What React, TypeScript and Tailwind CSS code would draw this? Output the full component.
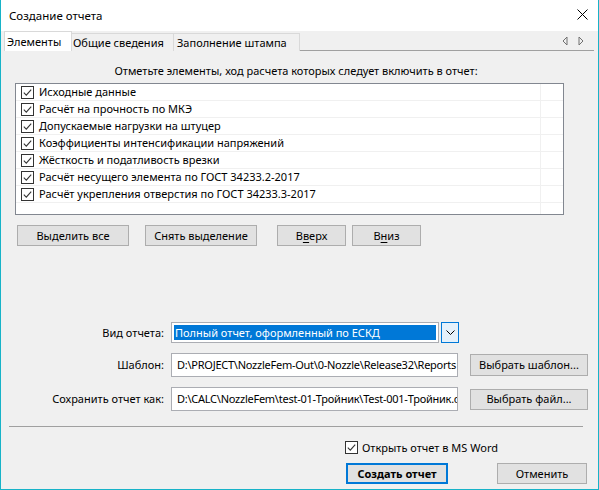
import React from 'react';

const items = [
  'Исходные данные',
  'Расчёт на прочность по МКЭ',
  'Допускаемые нагрузки на штуцер',
  'Коэффициенты интенсификации напряжений',
  'Жёсткость и податливость врезки',
  'Расчёт несущего элемента по ГОСТ 34233.2-2017',
  'Расчёт укрепления отверстия по ГОСТ 34233.3-2017',
];

const buttonClass =
  'flex shrink-0 items-center justify-center border border-[#adadad] bg-[#e1e1e1] leading-[16px]';
const fieldClass =
  'flex h-[24px] w-[287px] shrink-0 items-center overflow-hidden whitespace-nowrap border border-[#abadb3] bg-white pl-[5px] leading-[16px] tracking-[-0.25px]';

function CheckBox() {
  return (
    <svg width="13" height="13" viewBox="0 0 13 13" className="shrink-0">
      <rect x="0.5" y="0.5" width="12" height="12" fill="#fff" stroke="#333" />
      <path d="M2.8 6.6 L5.3 9.1 L10.2 3.6" fill="none" stroke="#333" strokeWidth="1.1" />
    </svg>
  );
}

export default function App() {
  return (
    <div className="flex h-[490px] w-[599px] flex-col border-x border-b border-[#17b3c8] bg-[#f0f0f0] font-['Noto_Sans','Open_Sans',sans-serif] text-[11px] text-black">
      {/* title bar */}
      <div className="flex h-[31px] shrink-0 justify-between bg-white pl-[8px] pr-[10px]">
        <span className="pt-[8px] text-[11.5px] leading-[16px]">Создание отчета</span>
        <svg width="11" height="11" viewBox="0 0 11 11" className="mt-[9px]">
          <path d="M0.5 0.5 L10.5 10.5 M10.5 0.5 L0.5 10.5" stroke="#000" strokeWidth="1" />
        </svg>
      </div>

      {/* tabs */}
      <div className="flex h-[20px] shrink-0 items-end pl-[3px]">
        <div className="flex h-[20px] w-[68px] items-center border border-b-0 border-[#d9d9d9] bg-white pl-[2px] leading-[16px]">
          Элементы
        </div>
        <div className="flex h-[18px] w-[102px] items-center border-r border-t border-[#d9d9d9] pl-[1px] leading-[16px]">
          Общие сведения
        </div>
        <div className="flex h-[18px] w-[126px] items-center border-r border-t border-[#d9d9d9] pl-[3px] leading-[16px]">
          Заполнение штампа
        </div>
        <div className="mr-[4px] flex h-full flex-1 items-center justify-end gap-[10px] border-b border-[#a0a0a0] pr-[10px]">
          <svg width="6" height="10" viewBox="0 0 6 10">
            <path d="M5 1 L1 5 L5 9 Z" fill="none" stroke="#707070" />
          </svg>
          <svg width="6" height="10" viewBox="0 0 6 10">
            <path d="M1 1 L5 5 L1 9 Z" fill="none" stroke="#707070" />
          </svg>
        </div>
      </div>

      {/* panel */}
      <div className="flex flex-1 flex-col">
        <div className="mt-[12px] pr-[7px] text-center leading-[16px]">
          Отметьте элементы, ход расчета которых следует включить в отчет:
        </div>

        <div className="ml-[14px] mt-[4px] flex h-[132px] w-[549px] flex-col border border-[#828790] bg-white">
          {items.map((item) => (
            <div key={item} className="flex h-[17px] shrink-0 border-b border-[#f0f0f0]">
              <div className="flex w-[525px] items-center gap-[5px] border-r border-[#f0f0f0] pl-[5px] leading-[16px]">
                <CheckBox />
                <span className="whitespace-nowrap">{item}</span>
              </div>
            </div>
          ))}
          <div className="flex flex-1">
            <div className="w-[525px] border-r border-[#f0f0f0]" />
          </div>
        </div>

        <div className="ml-[16px] mt-[10px] flex h-[21px]">
          <div className={`${buttonClass} w-[112px]`}>Выделить все</div>
          <div className={`${buttonClass} ml-[16px] w-[112px]`}>Снять выделение</div>
          <div className={`${buttonClass} ml-[20px] w-[69px]`}>
            В<span className="underline underline-offset-2">в</span>ерх
          </div>
          <div className={`${buttonClass} ml-[6px] w-[69px]`}>
            В<span className="underline underline-offset-2">н</span>из
          </div>
        </div>

        {/* report form */}
        <div className="mt-[76px] flex h-[21px] items-center">
          <div className="w-[163px] shrink-0 text-right leading-[16px]">Вид отчета:</div>
          <div className="ml-[7px] flex h-[21px] w-[288px]">
            <div className="flex flex-1 border border-[#abadb3] bg-white p-[2px]">
              <div className="flex flex-1 items-center bg-[#0078d7] pl-[1px] leading-[16px] text-white">
                Полный отчет, оформленный по ЕСКД
              </div>
            </div>
            <div className="ml-[2px] flex w-[18px] items-center justify-center border border-[#0078d7] bg-[#e5f1fb]">
              <svg width="9" height="5" viewBox="0 0 9 5">
                <path d="M0.5 0.5 L4.5 4.5 L8.5 0.5" fill="none" stroke="#000" />
              </svg>
            </div>
          </div>
        </div>

        <div className="mt-[10px] flex h-[24px] items-center">
          <div className="w-[163px] shrink-0 text-right leading-[16px]">Шаблон:</div>
          <div className={`${fieldClass} ml-[7px]`}>D:\PROJECT\NozzleFem-Out\0-Nozzle\Release32\Reports</div>
          <div className={`${buttonClass} ml-[12px] h-[22px] w-[118px]`}>Выбрать шаблон...</div>
        </div>

        <div className="mt-[10px] flex h-[24px] items-center">
          <div className="w-[163px] shrink-0 text-right leading-[16px]">Сохранить отчет как:</div>
          <div className={`${fieldClass} ml-[7px]`}>D:\CALC\NozzleFem\test-01-Тройник\Test-001-Тройник.docx</div>
          <div className={`${buttonClass} ml-[12px] h-[21px] w-[118px]`}>Выбрать файл...</div>
        </div>

        <div className="ml-[8px] mt-[15px] h-px w-[574px] bg-[#a0a0a0]" />

        <div className="ml-[344px] mt-[12px] flex h-[17px] items-center gap-[4px]">
          <CheckBox />
          <span className="leading-[16px]">Открыть отчет в MS Word</span>
        </div>

        <div className="ml-[345px] mt-[7px] flex">
          <div className="flex h-[21px] w-[102px] items-center justify-center border-2 border-[#0078d7] bg-[#e1e1e1] font-bold leading-[16px]">
            Создать отчет
          </div>
          <div className={`${buttonClass} ml-[49px] h-[21px] w-[90px]`}>Отменить</div>
        </div>
      </div>
    </div>
  );
}
